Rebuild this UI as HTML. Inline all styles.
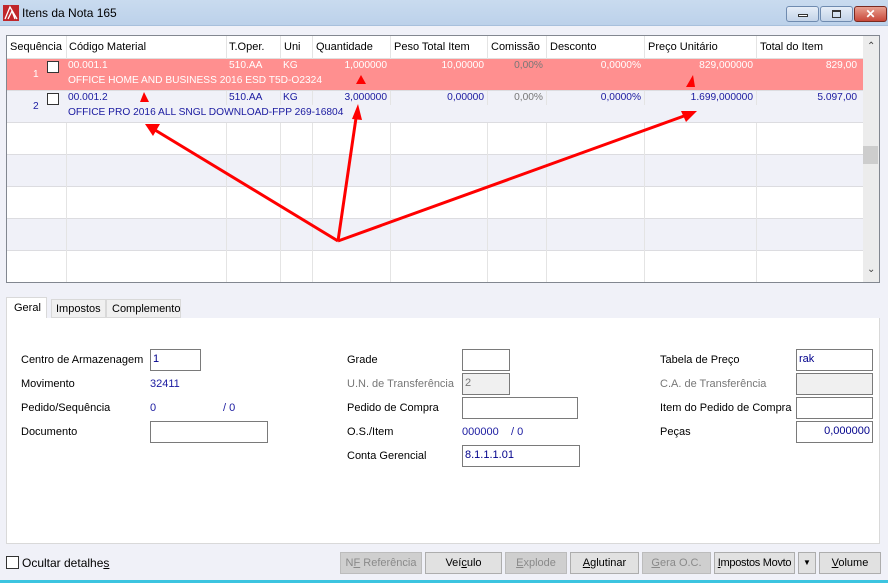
<!DOCTYPE html>
<html><head><meta charset="utf-8"><style>
*{margin:0;padding:0;box-sizing:border-box}
body{width:888px;height:583px;overflow:hidden;background:#f0f1f8;font-family:"Liberation Sans",sans-serif;font-size:11px;color:#000;position:relative}
.abs{position:absolute}
.title{left:0;top:0;width:888px;height:26px;background:linear-gradient(#c9dbef,#bcd1ea);border-bottom:1px solid #a8c0dc}
.grid{left:6px;top:35px;width:874px;height:248px;border:1px solid #828790;background:#fff;overflow:hidden}
.hdr{left:0;top:0;height:23px;width:856px;background:#fff;border-bottom:1px solid #e0e0e0}
.c{position:absolute;white-space:nowrap}
.row .c{font-size:10.2px}
.vl{position:absolute;width:1px;background:#e4e4e4}
.row{position:absolute;left:0;width:856px;height:32px;border-bottom:1px solid #dcdce0}
.inp{position:absolute;background:#fff;border:1px solid #7a7a7a;height:22px;padding:3px 2px;color:#00008b}
.lbl{position:absolute}
.btn{position:absolute;top:552px;height:22px;border:1px solid #adadad;background:#e1e1e1;text-align:center;line-height:20px;font-size:11px;white-space:nowrap}
.dis{color:#8a8a8a;background:#cfcfcf;border-color:#bcbcbc}
.blue{color:#1a1aa0}
</style></head><body>
<div class="abs title">
 <svg class="abs" style="left:3px;top:5px" width="16" height="16"><rect width="16" height="16" fill="#c0262a"/><path d="M2 14 L7 2 L14 14 M5 14 L9 6 L12 14" stroke="#fff" stroke-width="1.3" fill="none"/></svg>
 <div class="abs" style="left:22px;top:6px;font-size:12px">Itens da Nota 165</div>
 <div class="abs" style="left:786px;top:6px;width:33px;height:16px;border:1px solid #6f8bb0;border-radius:3px;background:linear-gradient(#e6eef8,#c3d3e8)"><div style="margin:7px auto 0;width:10px;height:3px;border:1px solid #333;background:#fff"></div></div>
 <div class="abs" style="left:820px;top:6px;width:33px;height:16px;border:1px solid #6f8bb0;border-radius:3px;background:linear-gradient(#e6eef8,#c3d3e8)"><div style="margin:3px auto 0;width:9px;height:8px;border:1px solid #333;border-top-width:2px"></div></div>
 <div class="abs" style="left:854px;top:6px;width:33px;height:16px;border:1px solid #7a2a20;border-radius:3px;background:linear-gradient(#e8a090,#c8483a);color:#fff;font-weight:bold;text-align:center;font-size:12px;line-height:14px">✕</div>
</div>

<div class="abs grid">
 <div class="abs hdr">
  <div class="c" style="left:3px;top:5px">Sequência</div>
  <div class="c" style="left:62px;top:5px">Código Material</div>
  <div class="c" style="left:222px;top:5px">T.Oper.</div>
  <div class="c" style="left:277px;top:5px">Uni</div>
  <div class="c" style="left:309px;top:5px">Quantidade</div>
  <div class="c" style="left:387px;top:5px">Peso Total Item</div>
  <div class="c" style="left:484px;top:5px">Comissão</div>
  <div class="c" style="left:543px;top:5px">Desconto</div>
  <div class="c" style="left:641px;top:5px">Preço Unitário</div>
  <div class="c" style="left:753px;top:5px">Total do Item</div>
 </div>
 <div class="row" style="top:23px;background:#ff8f8f;color:#fff">
  <div class="c" style="left:26px;top:10px">1</div>
  <div class="c" style="left:40px;top:2px;width:12px;height:12px;border:1px solid #333;background:#fff"></div>
  <div class="c" style="left:61px;top:1px">00.001.1</div>
  <div class="c" style="left:61px;top:16px">OFFICE HOME AND BUSINESS 2016 ESD T5D-O2324</div>
  <div class="c" style="left:222px;top:1px">510.AA</div>
  <div class="c" style="left:276px;top:1px">KG</div>
  <div class="c" style="right:476px;top:1px">1,000000</div>
  <div class="c" style="right:379px;top:1px">10,00000</div>
  <div class="c" style="right:320px;top:1px;color:#777">0,00%</div>
  <div class="c" style="right:222px;top:1px">0,0000%</div>
  <div class="c" style="right:110px;top:1px">829,000000</div>
  <div class="c" style="right:6px;top:1px">829,00</div>
 </div>
 <div class="row blue" style="top:55px;background:#f0f1f8">
  <div class="c" style="left:26px;top:10px">2</div>
  <div class="c" style="left:40px;top:2px;width:12px;height:12px;border:1px solid #333;background:#fff"></div>
  <div class="c" style="left:61px;top:1px">00.001.2</div>
  <div class="c" style="left:61px;top:16px">OFFICE PRO 2016 ALL SNGL DOWNLOAD-FPP 269-16804</div>
  <div class="c" style="left:222px;top:1px">510.AA</div>
  <div class="c" style="left:276px;top:1px">KG</div>
  <div class="c" style="right:476px;top:1px">3,000000</div>
  <div class="c" style="right:379px;top:1px">0,00000</div>
  <div class="c" style="right:320px;top:1px;color:#777">0,00%</div>
  <div class="c" style="right:222px;top:1px">0,0000%</div>
  <div class="c" style="right:110px;top:1px">1.699,000000</div>
  <div class="c" style="right:6px;top:1px">5.097,00</div>
 </div>
 <div class="row" style="top:87px;background:#fff"></div>
 <div class="row" style="top:119px;background:#f0f1f8"></div>
 <div class="row" style="top:151px;background:#fff"></div>
 <div class="row" style="top:183px;background:#f0f1f8"></div>
 <div class="row" style="top:215px;background:#fff"></div>
 <!-- header lines -->
 <div class="vl" style="left:59px;top:0;height:23px"></div><div class="vl" style="left:219px;top:0;height:23px"></div><div class="vl" style="left:273px;top:0;height:23px"></div><div class="vl" style="left:305px;top:0;height:23px"></div><div class="vl" style="left:383px;top:0;height:23px"></div><div class="vl" style="left:480px;top:0;height:23px"></div><div class="vl" style="left:539px;top:0;height:23px"></div><div class="vl" style="left:637px;top:0;height:23px"></div><div class="vl" style="left:749px;top:0;height:23px"></div>
 <!-- row 2 short lines -->
 <div class="vl" style="left:219px;top:55px;height:14px"></div><div class="vl" style="left:273px;top:55px;height:14px"></div><div class="vl" style="left:305px;top:55px;height:14px"></div><div class="vl" style="left:383px;top:55px;height:14px"></div><div class="vl" style="left:480px;top:55px;height:14px"></div><div class="vl" style="left:539px;top:55px;height:14px"></div><div class="vl" style="left:637px;top:55px;height:14px"></div><div class="vl" style="left:749px;top:55px;height:14px"></div>
 <!-- empty rows -->
 <div class="vl" style="left:59px;top:87px;height:160px"></div><div class="vl" style="left:219px;top:87px;height:160px"></div><div class="vl" style="left:273px;top:87px;height:160px"></div><div class="vl" style="left:305px;top:87px;height:160px"></div><div class="vl" style="left:383px;top:87px;height:160px"></div><div class="vl" style="left:480px;top:87px;height:160px"></div><div class="vl" style="left:539px;top:87px;height:160px"></div><div class="vl" style="left:637px;top:87px;height:160px"></div><div class="vl" style="left:749px;top:87px;height:160px"></div>
 <div class="abs" style="left:856px;top:0;width:17px;height:246px;background:#ececec">
  <div class="abs" style="left:4px;top:5px;font-size:10px;color:#444">⌃</div>
  <div class="abs" style="left:0;top:110px;width:15px;height:18px;background:#cdcdcd"></div>
  <div class="abs" style="left:4px;top:228px;font-size:10px;color:#444">⌄</div>
 </div>
</div>

<svg class="abs" style="left:0;top:0" width="888" height="300">
 <g stroke="#f00" stroke-width="3" fill="#f00">
  <line x1="338" y1="241" x2="155" y2="130"/><polygon points="145,124 160,124 153,136" stroke="none"/>
  <line x1="338" y1="241" x2="356" y2="118"/><polygon points="358,104 352,119 362,120" stroke="none"/>
  <line x1="338" y1="241" x2="684" y2="116"/><polygon points="697,111 681,111 686,122" stroke="none"/>
  <polygon points="144,92 140,102 149,102" stroke="none"/>
  <polygon points="361,75 356,84 366,84" stroke="none"/>
  <polygon points="693,75 686,87 695,87" stroke="none"/>
 </g>
</svg>

<div class="abs" style="left:6px;top:297px;width:41px;height:22px;background:#fff;border:1px solid #d9d9d9;border-bottom:none;padding:4px 0 0 7px">Geral</div>
<div class="abs" style="left:51px;top:299px;width:55px;height:19px;background:#f0f0f0;border:1px solid #d9d9d9;padding:3px 0 0 4px">Impostos</div>
<div class="abs" style="left:106px;top:299px;width:75px;height:19px;background:#f0f0f0;border:1px solid #d9d9d9;padding:3px 0 0 5px">Complemento</div>
<div class="abs" style="left:6px;top:318px;width:874px;height:226px;background:#fff;border:1px solid #d9d9d9;border-top:none"></div>

<div class="lbl" style="left:21px;top:354px">Centro de Armazenagem</div>
<div class="inp" style="left:150px;top:349px;width:51px">1</div>
<div class="lbl" style="left:21px;top:378px">Movimento</div><div class="lbl blue" style="left:150px;top:378px">32411</div>
<div class="lbl" style="left:21px;top:402px">Pedido/Sequência</div><div class="lbl blue" style="left:150px;top:402px">0</div><div class="lbl blue" style="left:223px;top:402px">/ 0</div>
<div class="lbl" style="left:21px;top:426px">Documento</div>
<div class="inp" style="left:150px;top:421px;width:118px"></div>

<div class="lbl" style="left:347px;top:354px">Grade</div><div class="inp" style="left:462px;top:349px;width:48px"></div>
<div class="lbl" style="left:347px;top:378px;color:#777">U.N. de Transferência</div><div class="inp" style="left:462px;top:373px;width:48px;background:#f0f0f0;color:#777">2</div>
<div class="lbl" style="left:347px;top:402px">Pedido de Compra</div><div class="inp" style="left:462px;top:397px;width:116px"></div>
<div class="lbl" style="left:347px;top:426px">O.S./Item</div><div class="lbl blue" style="left:462px;top:426px">000000</div><div class="lbl blue" style="left:511px;top:426px">/ 0</div>
<div class="lbl" style="left:347px;top:450px">Conta Gerencial</div><div class="inp" style="left:462px;top:445px;width:118px">8.1.1.1.01</div>

<div class="lbl" style="left:660px;top:354px">Tabela de Preço</div><div class="inp" style="left:796px;top:349px;width:77px">rak</div>
<div class="lbl" style="left:660px;top:378px;color:#777">C.A. de Transferência</div><div class="inp" style="left:796px;top:373px;width:77px;background:#f0f0f0"></div>
<div class="lbl" style="left:660px;top:402px">Item do Pedido de Compra</div><div class="inp" style="left:796px;top:397px;width:77px"></div>
<div class="lbl" style="left:660px;top:426px">Peças</div><div class="inp" style="left:796px;top:421px;width:77px;text-align:right">0,000000</div>

<div class="abs" style="left:6px;top:556px;width:13px;height:13px;border:1px solid #333;background:#fff"></div>
<div class="abs" style="left:22px;top:556px;font-size:12px">Ocultar detalhe<u>s</u></div>

<div class="btn dis" style="left:340px;width:82px">N<u>F</u> Referência</div>
<div class="btn" style="left:425px;width:77px">Veí<u>c</u>ulo</div>
<div class="btn dis" style="left:505px;width:62px"><u>E</u>xplode</div>
<div class="btn" style="left:570px;width:69px"><u>A</u>glutinar</div>
<div class="btn dis" style="left:642px;width:69px"><u>G</u>era O.C.</div>
<div class="btn" style="left:714px;width:81px;letter-spacing:-0.3px"><u>I</u>mpostos Movto</div>
<div class="btn" style="left:798px;width:18px;font-size:8px">▼</div>
<div class="btn" style="left:819px;width:62px"><u>V</u>olume</div>
<div class="abs" style="left:0;top:580px;width:888px;height:3px;background:#3cc4e0"></div>
</body></html>
